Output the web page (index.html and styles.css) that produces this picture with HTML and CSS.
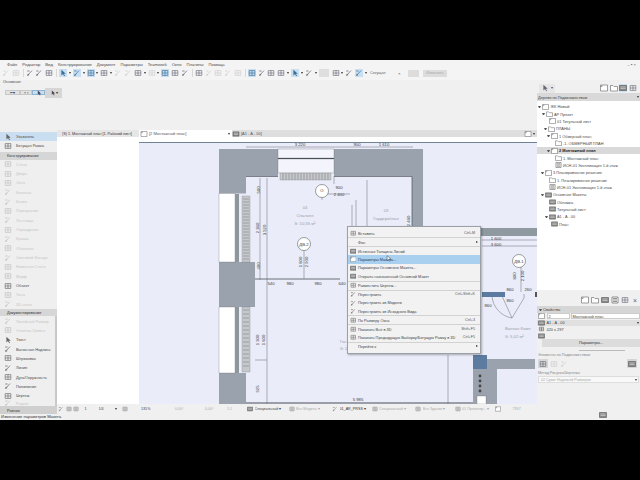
FILE: index.html
```html
<!DOCTYPE html>
<html lang="ru">
<head>
<meta charset="utf-8">
<title>ARCHICAD</title>
<link rel="stylesheet" href="styles.css">
</head>
<body>
<svg class="defs" width="0" height="0">
  <symbol id="plan" viewBox="0 0 8 7"><path d="M.5.5h7v6h-7z M2 .5v1.5h-1.5" fill="#fff" stroke="#777" stroke-width=".7"/></symbol>
  <symbol id="folder" viewBox="0 0 8 7"><path d="M.5 1h2.500l1 1h3.500v4.500h-7z" fill="#fff" stroke="#777" stroke-width=".7"/></symbol>
  <symbol id="list" viewBox="0 0 8 7"><path d="M1 .5h6v6h-6z" fill="#fff" stroke="#666" stroke-width=".7"/><path d="M2 2h4M2 3.500h4M2 5h4" stroke="#666" stroke-width=".7"/></symbol>
  <symbol id="sheet" viewBox="0 0 8 7"><path d="M.5 1h7v5h-7z" fill="#888" stroke="#555" stroke-width=".6"/><path d="M1.500 2.500h5M1.500 4h5" stroke="#ddd" stroke-width=".6"/></symbol>
  <symbol id="tool" viewBox="0 0 10 10"><path d="M1.500 2h7v6h-7z M1.500 5h7 M5 2v6" fill="none" stroke="currentColor" stroke-width=".8"/></symbol>
  <symbol id="pen" viewBox="0 0 10 10"><path d="M2 8 7.500 2M2 8l2-.6M2 8l.6-2M1.500 2.500h3" fill="none" stroke="currentColor" stroke-width=".9"/></symbol>
  <symbol id="ptr" viewBox="0 0 10 10"><path d="M3 1v7l2-1.800 1.500 2.800 1-.6-1.500-2.600h2.500z" fill="currentColor"/></symbol>
</svg>

<div class="app">
  <nav class="menubar">
    <span>Файл</span><span>Редактор</span><span>Вид</span><span>Конструирование</span><span>Документ</span><span>Параметры</span><span>Teamwork</span><span>Окно</span><span>Плагины</span><span>Помощь</span>
    <span class="winctl">– ▪ ×</span>
  </nav>

  <div class="toolbar">
    <svg class="ic dim"><use href="#pen"/></svg><svg class="ic dim"><use href="#tool"/></svg><i class="sep"></i>
    <svg class="ic"><use href="#pen"/></svg><svg class="ic"><use href="#pen"/></svg><svg class="ic"><use href="#tool"/></svg>
    <i class="sep"></i>
    <svg class="ic on"><use href="#ptr"/></svg><b class="tri"></b><svg class="ic on"><use href="#pen"/></svg><b class="tri"></b><svg class="ic on"><use href="#tool"/></svg><b class="tri"></b>
    <svg class="ic"><use href="#tool"/></svg><b class="tri"></b>
    <svg class="ic dim"><use href="#pen"/></svg><svg class="ic dim"><use href="#pen"/></svg><svg class="ic"><use href="#tool"/></svg><b class="tri"></b><svg class="ic dim"><use href="#tool"/></svg><b class="tri"></b>
    <svg class="ic on"><use href="#tool"/></svg><svg class="ic"><use href="#tool"/></svg><svg class="ic"><use href="#pen"/></svg><i class="sep"></i>
    <svg class="ic"><use href="#tool"/></svg><svg class="ic dim"><use href="#pen"/></svg><svg class="ic dim"><use href="#tool"/></svg><svg class="ic dim"><use href="#pen"/></svg><svg class="ic dim"><use href="#tool"/></svg>
    <i class="sep"></i>
    <svg class="ic on"><use href="#tool"/></svg><svg class="ic"><use href="#pen"/></svg><svg class="ic"><use href="#tool"/></svg><svg class="ic"><use href="#tool"/></svg><b class="tri"></b>
    <svg class="ic on"><use href="#ptr"/></svg><b class="tri"></b><svg class="ic"><use href="#pen"/></svg><b class="tri"></b>
    <span class="greyb"></span><svg class="ic"><use href="#tool"/></svg><b class="tri"></b><svg class="ic"><use href="#pen"/></svg><svg class="ic on"><use href="#pen"/></svg><b class="tri"></b>
    <span class="snap">Секущая</span><span class="xbtn">×</span>
    <span class="tbtn"></span><span class="tbtn wide">Изменить</span>
  </div>

  <div class="main">
    <div class="leftcol">
      <div class="infobar">
        <div class="infolabel">Основная:</div>
        <div class="inforow">
          <span class="seg">⇤ ▾</span><span class="seg short">⌖ ▾</span><span class="seg on"><svg class="ic2"><use href="#ptr"/></svg></span>
          <span class="seg dark"><svg class="ic2"><use href="#ptr"/></svg> ▾</span>
        </div>
      </div>

      <div class="work">
        <aside class="palette">
          <div class="tool active"><svg class="tic"><use href="#ptr"/></svg>Указатель</div>
          <div class="tool"><svg class="tic"><use href="#tool"/></svg>Бегущая Рамка</div>
          <div class="phead first">Конструирование</div>
          <div class="tool off"><svg class="tic"><use href="#tool"/></svg>Стена</div>
          <div class="tool off"><svg class="tic"><use href="#tool"/></svg>Дверь</div>
          <div class="tool off"><svg class="tic"><use href="#tool"/></svg>Окно</div>
          <div class="tool off"><svg class="tic"><use href="#pen"/></svg>Колонна</div>
          <div class="tool off"><svg class="tic"><use href="#pen"/></svg>Балка</div>
          <div class="tool off"><svg class="tic"><use href="#tool"/></svg>Перекрытие</div>
          <div class="tool off"><svg class="tic"><use href="#pen"/></svg>Лестница</div>
          <div class="tool off"><svg class="tic"><use href="#tool"/></svg>Ограждение</div>
          <div class="tool off"><svg class="tic"><use href="#pen"/></svg>Крыша</div>
          <div class="tool off"><svg class="tic"><use href="#tool"/></svg>Оболочка</div>
          <div class="tool off"><svg class="tic"><use href="#pen"/></svg>Световой Фонарь</div>
          <div class="tool off"><svg class="tic"><use href="#tool"/></svg>Навесная Стена</div>
          <div class="tool off"><svg class="tic"><use href="#tool"/></svg>Морф</div>
          <div class="tool"><svg class="tic"><use href="#tool"/></svg>Объект</div>
          <div class="tool off"><svg class="tic"><use href="#tool"/></svg>Зона</div>
          <div class="tool off"><svg class="tic"><use href="#pen"/></svg>3D-сетка</div>
          <div class="phead">Документирование</div>
          <div class="scrollpart">
            <div class="tool off"><svg class="tic"><use href="#pen"/></svg>Линейный Размер</div>
            <div class="tool off"><svg class="tic"><use href="#tool"/></svg>Отметка Уровня</div>
            <div class="tool"><svg class="tic"><use href="#ptr"/></svg>Текст</div>
            <div class="tool"><svg class="tic"><use href="#pen"/></svg>Выносная Надпись</div>
            <div class="tool"><svg class="tic"><use href="#tool"/></svg>Штриховка</div>
            <div class="tool"><svg class="tic"><use href="#pen"/></svg>Линия</div>
            <div class="tool"><svg class="tic"><use href="#tool"/></svg>Дуга/Окружность</div>
            <div class="tool"><svg class="tic"><use href="#pen"/></svg>Полилиния</div>
            <div class="tool"><svg class="tic"><use href="#tool"/></svg>Чертеж</div>
            <div class="tool off short"><svg class="tic"><use href="#pen"/></svg>Разрез</div>
          </div>
          <div class="phead last">Разное</div>
        </aside>

        <section class="viewer">
          <div class="tabs">
            <div class="tab one">(S) 1. Монтажный план [1. Рабочий лист]</div>
            <div class="tab two"><svg class="tabic"><use href="#plan"/></svg>[2 Монтажный план]<b class="tri t2"></b></div>
            <div class="tab three"><svg class="tabic"><use href="#sheet"/></svg>[A1 - A - 00]<svg class="tabic endic"><use href="#plan"/></svg><b class="tri"></b></div>
          </div>
          <div class="canvasrow">
            <div class="blank"></div>
            <div class="canvascol">
              <div class="tabgap"></div>
              <svg class="plan" viewBox="139 142 398 262" preserveAspectRatio="none">
                <rect x="139" y="142" width="398" height="262" fill="#eaecf9"/>
                <path d="M139 142.500H537" stroke="#6f8296"/>
                <g fill="#9aa2ad">
                  <path d="M219 149h59v27h-32v17.500h-27z"/>
                  <path d="M334 149h89v79h-11v-52h-78z"/>
                  <path d="M219 262h36v45h-36z"/>
                  <path d="M219 373h27v31h-27z"/>
                  <path d="M423 228h114v8h-114z" fill="#8e9aa0"/>
                  <path d="M473 355h14v4h48v10h-38v35h-24z"/>
                </g>
                <g fill="#fff" stroke="#666" stroke-width=".3">
                  <rect x="219" y="193.500" width="16" height="68.500"/>
                  <rect x="219" y="307" width="16" height="66"/>
                  <rect x="477" y="396" width="9" height="8"/>
                </g>
                <g fill="#f4f5fc" stroke="#666" stroke-width=".3">
                  <rect x="278" y="149" width="56" height="9"/>
                  <rect x="278" y="159" width="56" height="14"/>
                </g>
                <g fill="#8e969e">
                  <rect x="235" y="194" width="4" height="68"/>
                  <rect x="235" y="307" width="4" height="66"/>
                </g>
                <g fill="#c5c8cc" stroke="#777" stroke-width=".3">
                  <rect x="242" y="196" width="8" height="66"/>
                  <rect x="242" y="307" width="8" height="65"/>
                  <rect x="280" y="173" width="51" height="7"/>
                </g>
                <path d="M243 199h6M243 202h6M243 205h6M243 208h6M243 211h6M243 214h6M243 217h6M243 220h6M243 223h6M243 226h6M243 229h6M243 232h6M243 235h6M243 238h6M243 241h6M243 244h6M243 247h6M243 250h6M243 253h6M243 256h6M243 259h6M243 310h6M243 314h6M243 318h6M243 322h6M243 326h6M243 330h6M243 334h6M243 338h6M243 342h6M243 346h6M243 350h6M243 354h6M243 358h6M243 362h6M243 366h6M283 173v7M286 173v7M289 173v7M292 173v7M295 173v7M298 173v7M301 173v7M304 173v7M307 173v7M310 173v7M313 173v7M316 173v7M319 173v7M322 173v7M325 173v7M328 173v7" stroke="#777" stroke-width=".5"/>
                <g fill="none" stroke="#4a5058" stroke-width=".7">
                  <path d="M246 176.500H278M334 176.500H412M412 176.500V228"/>
                  <path d="M278 158.500H334" stroke-width="1"/>
                  <path d="M246 403H473" stroke-width="1.200"/>
                  <path d="M255 279H340" stroke-width=".8"/>
                </g>
                <g fill="none" stroke="#5a6068" stroke-width=".45">
                  <path d="M246 147H413"/>
                  <path d="M260 178V280M267 178V404M448 355V404"/>
                  <path d="M304 250V279M322 197V200M316 194H350M334 176V184M367 180V226M356 200V226M352 205V226"/>
                  <path d="M521 264V292M482 246H537M482 240H537"/>
                  <path d="M502 296l10 22 12-20v-4"/>
                  <path d="M492 296a24 24 0 0 0 20 22"/>
                  <path d="M255 360H267"/>
                </g>
                <rect x="482" y="292" width="23" height="5" fill="#5b7ca0"/>
                <rect x="535" y="292" width="2" height="5" fill="#555"/>
                <path d="M473 355h14v14h-14z" fill="#5b7ca0"/>
                <g fill="#444">
                  <circle cx="480" cy="376" r="1.400"/><circle cx="480" cy="381" r="1.400"/><circle cx="480" cy="386" r="1.400"/><circle cx="480" cy="391" r="1.400"/>
                </g>
                <g fill="#fff" stroke="#444" stroke-width=".5">
                  <circle cx="322" cy="191" r="6.500"/>
                  <circle cx="304" cy="244" r="6.500"/>
                  <circle cx="519" cy="261" r="6.500"/>
                </g>
                <g class="dim-t">
                  <text x="300" y="145.500" text-anchor="middle">3 220</text>
                  <text x="357" y="145.500" text-anchor="middle">900</text>
                  <text x="384" y="145.500" text-anchor="middle">1 610</text>
                  <text x="339" y="189" text-anchor="middle">900</text>
                  <text x="339" y="196" text-anchor="middle">2 400</text>
                  <text x="271" y="285" text-anchor="middle">540</text>
                  <text x="290" y="285" text-anchor="middle">980</text>
                  <text x="318" y="285" text-anchor="middle">980</text>
                  <text x="342" y="285" text-anchor="middle">640</text>
                  <text x="358" y="400.500" text-anchor="middle">5 985</text>
                  <text x="510" y="291" text-anchor="middle">860</text>
                  <text x="528" y="291" text-anchor="middle">260</text>
                  <text x="496" y="239.500" text-anchor="middle">1 600</text>
                  <text x="496" y="245.500" text-anchor="middle">3 600</text>
                  <text x="510" y="302" text-anchor="middle">860</text>
                  <text x="488" y="307" text-anchor="middle">860</text>
                  <text x="304" y="245.500" text-anchor="middle">ДВ-2</text>
                  <text x="519" y="262.500" text-anchor="middle">ДВ-1</text>
                  <text x="322" y="192" text-anchor="middle">О</text>
                  <text transform="translate(260 190) rotate(-90)" text-anchor="middle">500</text>
                  <text transform="translate(259 228) rotate(-90)" text-anchor="middle">2 360</text>
                  <text transform="translate(266 230) rotate(-90)" text-anchor="middle">3 520</text>
                  <text transform="translate(260 266) rotate(-90)" text-anchor="middle">400</text>
                  <text transform="translate(302 262) rotate(-90)" text-anchor="middle">1 800</text>
                  <text transform="translate(308 262) rotate(-90)" text-anchor="middle">2 900</text>
                  <text transform="translate(259 340) rotate(-90)" text-anchor="middle">1 300</text>
                  <text transform="translate(265 340) rotate(-90)" text-anchor="middle">1 600</text>
                  <text transform="translate(259 389) rotate(-90)" text-anchor="middle">925</text>
                  <text transform="translate(410 221) rotate(-90)" text-anchor="middle">2 480</text>
                  <text transform="translate(516 276) rotate(-90)" text-anchor="middle">800</text>
                  <text transform="translate(524 276) rotate(-90)" text-anchor="middle">2 100</text>
                </g>
                <g class="room-t">
                  <text x="305" y="209" text-anchor="middle">04</text>
                  <text x="305" y="217" text-anchor="middle">Спальня</text>
                  <text x="305" y="224.500" text-anchor="middle">S: 10,55 м²</text>
                  <text x="386" y="212" text-anchor="middle">03</text>
                  <text x="386" y="220" text-anchor="middle">Гардеробная</text>
                  <text x="340" y="343">Гост</text>
                  <text x="340" y="350">S: 21</text>
                  <text x="505" y="330">Ванная Комн</text>
                  <text x="505" y="338">S: 5,02 м²</text>
                </g>
              </svg>
            </div>
          </div>
          <div class="menu">
            <div class="mi"><svg class="mic"><use href="#tool"/></svg><span>Вставить</span><kbd>Ctrl+M</kbd></div>
            <hr>
            <div class="mi"><span>Фон</span><b class="arr"></b></div>
            <hr>
            <div class="mi"><svg class="mic thick"><use href="#sheet"/></svg><span>Истинная Толщина Линий</span></div>
            <div class="mi hi"><svg class="mic"><use href="#plan"/></svg><span>Параметры Макета...</span></div>
            <div class="mi"><svg class="mic"><use href="#sheet"/></svg><span>Параметры Основного Макета...</span></div>
            <div class="mi"><svg class="mic"><use href="#sheet"/></svg><span>Открыть назначенный Основной Макет</span></div>
            <hr>
            <div class="mi"><svg class="mic"><use href="#tool"/></svg><span>Разместить Чертеж...</span></div>
            <hr>
            <div class="mi"><svg class="mic"><use href="#pen"/></svg><span>Перестроить</span><kbd>Ctrl+Shift+K</kbd></div>
            <div class="mi"><svg class="mic"><use href="#pen"/></svg><span>Перестроить из Модели</span></div>
            <div class="mi"><svg class="mic"><use href="#pen"/></svg><span>Перестроить из Исходного Вида</span></div>
            <hr>
            <div class="mi"><svg class="mic"><use href="#tool"/></svg><span>По Размеру Окна</span><kbd>Ctrl+3</kbd></div>
            <hr>
            <div class="mi"><svg class="mic"><use href="#tool"/></svg><span>Показать Всё в 3D</span><kbd>Shift+F5</kbd></div>
            <div class="mi"><svg class="mic"><use href="#tool"/></svg><span>Показать Предыдущую Выборку/Бегущую Рамку в 3D</span><kbd>Ctrl+F5</kbd></div>
            <hr>
            <div class="mi"><span>Перейти к</span><b class="arr"></b></div>
          </div>
          <svg class="cursor" viewBox="0 0 10 10"><use href="#ptr"/></svg>
          <div class="viewbar">
            <svg class="ic3"><use href="#pen"/></svg><svg class="ic3"><use href="#tool"/></svg><svg class="ic3"><use href="#tool"/></svg>
            <span class="vb w-a">1</span><span class="vb w-b">1/4</span><b class="tri"></b><svg class="ic3 after"><use href="#tool"/></svg>
            <span class="vb w-c">135%</span><span class="vb faint w-d">0,00°</span><span class="vb faint w-d">0,00°</span><span class="vb faint w-e">1:1</span>
            <svg class="ic3"><use href="#sheet"/></svg><span class="vb w-f">Специальный ▾</span>
            <svg class="ic3"><use href="#tool"/></svg><span class="vb faint w-g">Вся Модель ▾</span>
            <svg class="ic3"><use href="#pen"/></svg><span class="vb w-h">01_АR_PRSS ▾</span>
            <svg class="ic3"><use href="#tool"/></svg><span class="vb faint w-g">Специальный ▾</span>
            <svg class="ic3"><use href="#tool"/></svg><span class="vb faint w-k">Вся Здание ▾</span>
            <svg class="ic3"><use href="#tool"/></svg><span class="vb faint w-i">01 Проектир... ▾</span>
            <svg class="ic3"><use href="#plan"/></svg><span class="vb faint w-j">7337</span>
          </div>
        </section>
      </div>
      <div class="status">Изменение параметров Макета.</div>
    </div>

    <aside class="rightcol">
      <div class="navbar">
        <span class="searchbtn"><svg class="ic"><use href="#ptr"/></svg> ▾</span>
        <span class="spacer"></span>
        <svg class="ic"><use href="#plan"/></svg><svg class="ic"><use href="#folder"/></svg><svg class="ic on"><use href="#sheet"/></svg><svg class="ic"><use href="#tool"/></svg>
      </div>
      <div class="navhead">Дерево по Подмножествам<b class="tri dn"></b></div>
      <div class="tree">
        <div class="row p1"><b class="tw"></b><svg class="nic"><use href="#plan"/></svg>ЖК Новый</div>
        <div class="row p4"><b class="tw"></b><svg class="nic"><use href="#folder"/></svg>АР Проект</div>
        <div class="row p11"><svg class="nic"><use href="#plan"/></svg>01 Титульный лист</div>
        <div class="row p6"><b class="tw"></b><svg class="nic"><use href="#folder"/></svg>ПЛАНЫ</div>
        <div class="row p9"><b class="tw"></b><svg class="nic"><use href="#plan"/></svg>1 Обмерный план</div>
        <div class="row p17"><svg class="nic"><use href="#folder"/></svg>-1. ОБМЕРНЫЙ ПЛАН</div>
        <div class="row p9 sel"><b class="tw"></b><svg class="nic"><use href="#plan"/></svg>2 Монтажный план</div>
        <div class="row p17"><svg class="nic"><use href="#folder"/></svg>1. Монтажный план</div>
        <div class="row p17"><svg class="nic"><use href="#list"/></svg>ИСН-01 Экспликация 1-й этаж</div>
        <div class="row p3"><b class="tw"></b><svg class="nic"><use href="#plan"/></svg>3 Планировочное решение</div>
        <div class="row p11"><svg class="nic"><use href="#folder"/></svg>1. Планировочное решение</div>
        <div class="row p11"><svg class="nic"><use href="#list"/></svg>ИСН-01 Экспликация 1-й этаж</div>
        <div class="row p3"><b class="tw"></b><svg class="nic"><use href="#sheet"/></svg>Основные Макеты</div>
        <div class="row p11"><svg class="nic"><use href="#sheet"/></svg>Обложка</div>
        <div class="row p11"><svg class="nic"><use href="#sheet"/></svg>Титульный лист</div>
        <div class="row p7"><b class="tw"></b><svg class="nic"><use href="#sheet"/></svg>A1 - A - 00</div>
        <div class="row p13"><svg class="nic"><use href="#sheet"/></svg>План</div>
      </div>
      <div class="nav-actions">
        <svg class="ic"><use href="#plan"/></svg><svg class="ic"><use href="#folder"/></svg><svg class="ic"><use href="#sheet"/></svg><svg class="ic"><use href="#list"/></svg><svg class="ic"><use href="#tool"/></svg><span class="closex">×</span>
      </div>
      <div class="navhead props"><b class="tw"></b>Свойства</div>
      <div class="proprow"><svg class="nic"><use href="#plan"/></svg><span class="inp small">2</span><span class="inp grow">Монтажный план</span></div>
      <div class="proprow grey"><svg class="nic"><use href="#sheet"/></svg>A1 - A - 00<b class="tri dn"></b></div>
      <div class="proprow"><svg class="nic"><use href="#tool"/></svg>420 x 297</div>
      <div class="proprow"><svg class="nic"><use href="#sheet"/></svg></div>
      <div class="paramsbtn">Параметры...</div>
      <div class="divider"></div>
      <div class="plabel">Элементы по Подмножествам:</div>
      <div class="iconline"><span class="sq"><svg class="ic"><use href="#tool"/></svg></span><svg class="ic dim"><use href="#tool"/></svg><svg class="ic dim"><use href="#pen"/></svg><span class="spacer"></span><span class="sq"><svg class="ic"><use href="#sheet"/></svg></span></div>
      <div class="plabel second">Метод Рисунка/Чертежа:</div>
      <div class="select">02 Сдвиг Надписей Размеров<b class="tri dn"></b></div>
      <div class="bottomic"><svg class="ic"><use href="#sheet"/></svg></div>
    </aside>
  </div>
</div>
</body>
</html>
```

FILE: styles.css
```css
* { box-sizing: border-box; }
html, body { margin: 0; padding: 0; height: 100%; background: #000; overflow: hidden; }
body { padding-top: 60px; font-family: "Liberation Sans", Arial, sans-serif; font-size: 4.400px; color: #333; }
.defs { display: block; height: 0; }

.app { width: 640px; height: 360px; background: #f0f0f0; display: flex; flex-direction: column; overflow: hidden; }

.menubar { height: 8px; flex: none; display: flex; align-items: center; padding-left: 7px; gap: 5px; background: #f4f4f4; font-size: 4.200px; color: #4a4a4a; }
.winctl { margin-left: auto; margin-right: 4px; color: #555; }

.toolbar { height: 12px; flex: none; display: flex; align-items: center; padding: 0 0 2px 2px; background: #f4f4f4; color: #667; }
.ic { width: 8px; height: 8px; margin-right: 1.800px; flex: none; color: #667; }
.ic.dim { color: #cdcdcd; }
.ic.on { background: #c8dff2; color: #3c6c94; }
.sep { width: 1px; height: 8px; margin: 0 1.500px; background: #d8d8d8; flex: none; }
.tri { width: 0; height: 0; flex: none; border-left: 1.500px solid transparent; border-right: 1.500px solid transparent; border-top: 2px solid #333; margin-right: 2px; }
.tri.dn { margin-left: auto; margin-right: 1px; }
.greyb { width: 10px; height: 8px; background: #dedede; margin-right: 3px; flex: none; }
.snap { width: 28px; flex: none; font-size: 3.800px; margin-left: 1px; }
.xbtn { width: 6px; flex: none; color: #555; }
.tbtn { width: 11px; height: 7px; margin-left: 4px; background: #dcdcdc; flex: none; }
.tbtn.wide { width: 24px; font-size: 3.800px; color: #aaa; text-align: center; line-height: 7px; }

.main { flex: 1; min-height: 0; display: flex; }
.leftcol { width: 537px; flex: none; display: flex; flex-direction: column; }

.infobar { height: 50px; flex: none; padding-left: 3px; background: #f0f0f0; }
.infolabel { font-size: 3.800px; height: 5px; line-height: 5px; color: #444; }
.inforow { display: flex; align-items: center; margin-top: 2.500px; height: 10px; padding-left: 2px; }
.seg { height: 5.500px; width: 15px; display: flex; align-items: center; justify-content: center; background: #e3e3e3; border: .5px solid #c8c8c8; font-size: 3.500px; flex: none; }
.seg.short { width: 12px; }
.seg.on { background: #c8dff2; width: 13px; border-color: #8fb4d2; }
.seg.dark { width: 17px; height: 10px; background: #d6d6d6; border: 0; }
.ic2 { width: 6px; height: 6px; color: #445; }

.work { height: 284px; flex: none; display: flex; }
.palette { width: 57px; flex: none; display: flex; flex-direction: column; padding-top: 2px; background: #efefef; }
.tool { height: 9.330px; flex: none; display: flex; align-items: center; font-size: 3.900px; color: #4a4a4a; }
.tool.active { background: #c9def0; }
.tool.off { color: #c6c6c6; }
.tool.off .tic { color: #c0c0c0; }
.tool.short { height: 6px; overflow: hidden; }
.tic { width: 8px; height: 8px; margin: 0 4px; flex: none; color: #666; }
.phead { height: 7.500px; flex: none; background: #d6d6d6; display: flex; align-items: center; padding-left: 7px; font-size: 3.900px; color: #333; }
.phead.first { margin-top: 1.500px; }
.phead.last { margin-top: auto; background: #cfcfcf; margin-bottom: 2px; }
.scrollpart { border-right: 2px solid #c9c9c9; }

.viewer { flex: 1; min-width: 0; display: flex; flex-direction: column; position: relative; }
.tabs { height: 7px; flex: none; display: flex; background: #dedede; }
.tab { display: flex; align-items: center; font-size: 4px; white-space: nowrap; overflow: hidden; }
.tab.one { width: 82px; background: #e6e6e6; color: #333; padding-left: 5px; font-size: 3.700px; }
.tab.two { width: 93px; background: #fff; color: #555; padding-left: 1px; }
.tab.three { flex: 1; color: #555; }
.tabic { width: 8px; height: 6px; flex: none; margin-right: 1px; }
.endic { margin-left: auto; }
.t2 { margin-left: auto; margin-right: 2px; }
.canvasrow { height: 267px; flex: none; display: flex; }
.blank { width: 82px; flex: none; background: #fff; }
.canvascol { flex: 1; min-width: 0; display: flex; flex-direction: column; }
.tabgap { height: 5px; flex: none; background: #fff; }
.plan { height: 262px; width: 398px; display: block; flex: none; }
.dim-t text { font-size: 4.200px; fill: #3a3a3a; font-family: "Liberation Sans", Arial, sans-serif; }
.room-t text { font-size: 4.200px; fill: #9aa0a8; font-family: "Liberation Sans", Arial, sans-serif; }

.menu { position: absolute; left: 290px; top: 96px; width: 134px; height: 128px; padding: 2px 0 1px; background: #f2f2f2; border: .6px solid #9aa0a6; box-shadow: 1px 1px 2px rgba(0,0,0,.3); }
.mi { height: 8.400px; display: flex; align-items: center; padding-left: 10px; position: relative; font-size: 3.900px; color: #444; white-space: nowrap; }
.mi.hi { background: #a9d0ee; color: #2a3f55; }
.mic { position: absolute; left: 1.500px; top: 1px; width: 6.500px; height: 6.500px; color: #666; }
.menu hr { margin: 0; height: .6px; border: 0; background: #d2d2d2; }
.mi kbd { margin-left: auto; margin-right: 5px; font: inherit; font-size: 3.700px; color: #555; }
.arr { margin-left: auto; margin-right: 2px; width: 0; height: 0; border-top: 1.500px solid transparent; border-bottom: 1.500px solid transparent; border-left: 2px solid #333; }
.cursor { position: absolute; left: 328px; top: 125px; width: 7px; height: 7px; color: #fff; stroke: #222; stroke-width: .6px; }

.viewbar { height: 10px; flex: none; display: flex; align-items: center; padding-left: 1px; background: #f0f0f0; font-size: 3.700px; color: #444; }
.ic3 { width: 6px; height: 6px; flex: none; margin-right: 1.500px; color: #777; }
.vb { flex: none; white-space: nowrap; overflow: hidden; }
.vb.faint { color: #aaa; }
.w-a { width: 18px; padding-left: 4px; }
.w-b { width: 16px; }
.after { margin-left: 3px; }
.w-c { width: 38px; padding-left: 12px; }
.w-d { width: 30px; padding-left: 8px; }
.w-e { width: 20px; }
.w-f { width: 34px; }
.w-g { width: 36px; }
.w-h { width: 32px; color: #333; }
.w-k { width: 32px; }
.w-i { width: 33px; }
.w-j { width: 22px; padding-left: 10px; }

.status { flex: 1; min-height: 0; font-size: 4.100px; line-height: 6px; padding-left: 1px; color: #333; background: #f0f0f0; }

.rightcol { width: 103px; flex: none; display: flex; flex-direction: column; background: #f0f0f0; }
.navbar { height: 13px; flex: none; display: flex; align-items: center; padding: 3px 1px 0 2px; }
.searchbtn { display: flex; align-items: center; font-size: 3.500px; color: #555; background: #e6e6e6; padding: 0 2px; height: 9px; }
.spacer { flex: 1; }
.navhead { height: 8px; flex: none; display: flex; align-items: center; padding-left: 1px; background: #d9d9d9; font-size: 3.900px; color: #444; }
.tree { height: 189px; flex: none; background: #fff; padding-top: 2px; overflow: hidden; }
.row { height: 7.350px; display: flex; align-items: center; font-size: 3.900px; color: #4a4a4a; white-space: nowrap; }
.sel { background: #d9d9d9; color: #222; font-weight: bold; }
.nic { width: 7px; height: 6px; margin-right: 1.500px; flex: none; }
.tw { width: 3px; height: 2px; margin-right: 1px; flex: none; border-left: 1.500px solid transparent; border-right: 1.500px solid transparent; border-top: 2px solid #555; }
.p1 { padding-left: 1px; }
.p3 { padding-left: 3.500px; }
.p4 { padding-left: 4.500px; }
.p6 { padding-left: 6.500px; }
.p7 { padding-left: 7.500px; }
.p9 { padding-left: 9.500px; }
.p11 { padding-left: 11.500px; }
.p13 { padding-left: 13.500px; }
.p17 { padding-left: 17.500px; }
.nav-actions { height: 16px; flex: none; display: flex; align-items: center; justify-content: flex-end; padding: 4px 1px 0 0; }
.nav-actions .ic { margin-right: 2px; }
.closex { width: 8px; font-size: 7px; color: #666; text-align: center; }
.props { height: 7px; background: #d6d6d6; padding-left: 2px; }
.proprow { height: 6.600px; flex: none; display: flex; align-items: center; padding-left: 1px; font-size: 3.900px; color: #444; }
.proprow.grey { background: #e0e0e0; }
.inp { background: #fff; height: 6px; line-height: 6px; border: .4px solid #ccc; }
.inp.small { width: 23px; padding-left: 1px; }
.inp.grow { flex: 1; margin-left: 1px; padding-left: 1px; }
.paramsbtn { height: 8px; margin-left: 5px; flex: none; background: #dcdcdc; text-align: center; line-height: 8px; font-size: 3.900px; }
.divider { height: 1px; margin: 3px 15px 0 42px; flex: none; background: #bbb; }
.plabel { font-size: 3.700px; color: #888; margin: 2px 0 0 1px; height: 5px; line-height: 5px; flex: none; }
.plabel.second { margin-top: 1.500px; }
.iconline { height: 11px; flex: none; display: flex; align-items: center; padding: 0 1px; }
.sq { width: 10px; height: 9px; display: flex; align-items: center; justify-content: center; background: #d6d6d6; margin-right: 2px; }
.sq .ic { margin: 0; }
.select { height: 7px; flex: none; margin: .5px 1px 0; display: flex; align-items: center; padding-left: 2px; background: #f8f8f8; border: .4px solid #ddd; font-size: 3.600px; color: #aaa; }
.bottomic { margin-top: auto; display: flex; justify-content: center; padding: 0 0 1px 30px; }
```
